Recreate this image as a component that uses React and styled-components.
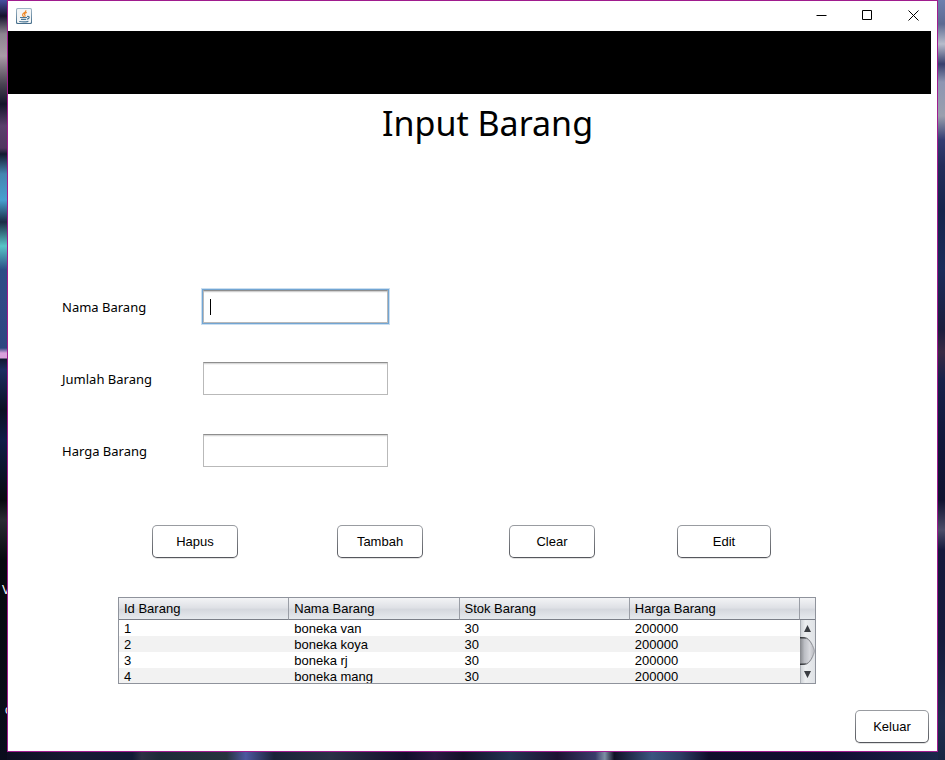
import React from "react";
import styled, { createGlobalStyle } from "styled-components";

const GlobalStyle = createGlobalStyle`
  * { box-sizing: border-box; }
  body { margin: 0; font-family: "Liberation Sans", Arial, sans-serif; font-size: 13px; color: #000; }
`;

const Desktop = styled.div`
  position: relative;
  display: flex;
  min-height: 100vh;
  padding: 0 7px 8px;
  overflow: hidden;
  background:
    linear-gradient(180deg, #4650a0 0, #15122c 16px, #8d8490 34px, #a99aa6 56px, #4a4352 84px, #14142a 104px, #5a3e6c 126px, #51365f 148px, #141a30 154px, #4585b0 174px, #48a0d0 200px, #1b2b45 222px, #58c4c8 246px, #2b4d86 270px, #304a86 298px, #2c4680 348px, #d9a0dc 353px, #d9a0dc 358px, #101830 359px, #1c2c60 370px, #0b1022 410px, #101c48 440px, #08090f 500px, #2a2a33 520px, #07080e 560px, #0a0c1c 100%) left top / 7px 100% no-repeat,
    linear-gradient(180deg, #6d7fae 0, #5d6a92 24px, #b7bccb 44px, #38406e 64px, #8d95b2 82px, #9a9fad 116px, #333c72 140px, #232c5a 166px, #16234c 210px, #1b2a5a 270px, #1c1d3d 330px, #3a2a44 352px, #17204a 380px, #11163a 440px, #101230 500px, #4c4c68 530px, #15183c 550px, #161a3c 640px, #1e2d4e 720px, #182543 100%) right top / 7px 100% no-repeat,
    linear-gradient(90deg, #0d0d20 0, #171a34 8%, #111a35 14%, #2c3044 15%, #1d2a37 17%, #26333e 24%, #4d57a0 26%, #1a2238 29%, #2a3146 35%, #130d2b 43%, #291942 46%, #131128 49%, #233352 54%, #1c1232 59%, #3a3c6a 63%, #7d8fa6 64%, #101126 65%, #3a5580 69%, #2c3c63 72%, #100d2a 75%, #120b32 88%, #1b2a4c 100%);
`;

const WallpaperText = styled.span`
  position: absolute;
  left: ${(p) => p.$left}px;
  top: ${(p) => p.$top}px;
  color: #fff;
  font-size: 12px;
  line-height: 14px;
`;

const Window = styled.main`
  position: relative;
  flex: 1;
  display: flex;
  flex-direction: column;
  background: #fff;
  border: 1px solid #a01c8e;
`;

const TitleBar = styled.header`
  display: flex;
  align-items: center;
  justify-content: space-between;
  height: 30px;
  padding-left: 8px;
`;

const WindowControls = styled.div`
  display: flex;
  align-self: flex-start;
`;

const ControlButton = styled.button`
  display: flex;
  align-items: center;
  justify-content: center;
  width: 46px;
  height: 29px;
  padding: 0 1px 0 0;
  border: 0;
  background: transparent;

  svg { display: block; }
`;

const Banner = styled.div`
  height: 63px;
  margin-right: 6px;
  background: #000;
`;

const Title = styled.h1`
  margin: 4px 0 0 30px;
  font: 400 34px/50px "Noto Sans", sans-serif;
  text-align: center;
`;

const Form = styled.form`
  display: flex;
  flex-direction: column;
`;

const Fields = styled.div`
  display: grid;
  gap: 37px;
  padding: 141px 54px 0;
`;

const Field = styled.div`
  display: grid;
  grid-template-columns: 140px 187px;
  align-items: center;
`;

const FieldLabel = styled.label`
  font: 400 13px/18px "Noto Sans", sans-serif;
`;

const TextInput = styled.input`
  height: 33px;
  margin: 1px;
  padding: 0 7px;
  border: 1px solid #b9b9b9;
  border-top-color: #8e8e8e;
  outline: 0;
  background: #fff;
  box-shadow: inset 0 1px #d8d8d8, inset 0 2px #f4f4f4;
  font: 400 14px/18px "Noto Sans", sans-serif;

  &:focus {
    box-shadow: inset 0 1px #d0d0d0, inset 0 2px #f4f4f4, 0 0 0 1px #72a5d3, 0 0 0 2px #c9def0;
  }

  &:focus:placeholder-shown {
    caret-color: transparent;
    background: linear-gradient(#000, #000) 6px 8px / 1px 16px no-repeat #fff;
  }
`;

const Actions = styled.div`
  display: grid;
  grid-template-columns: 185px 172px 168px 94px;
  padding: 57px 0 0 144px;
`;

const Button = styled.button`
  width: ${(p) => (p.$wide ? 94 : 86)}px;
  height: 33px;
  padding: 0;
  border: 1px solid transparent;
  border-radius: 5px;
  background:
    linear-gradient(#fff, #fff) padding-box,
    linear-gradient(#9a9da2, #54565c) border-box;
  box-shadow: 0 1px #e2e2e2;
  font: 400 13px/16px "Liberation Sans", Arial, sans-serif;
  color: #000;
`;

const TableFrame = styled.div`
  height: 87px;
  margin: 39px 121px 0 110px;
  overflow: hidden;
  border: 1px solid #8f939c;
`;

const Table = styled.table`
  width: 100%;
  table-layout: fixed;
  border-collapse: separate;
  border-spacing: 0;
`;

const HeadCell = styled.th`
  width: ${(p) => (p.$narrow ? "15px" : "auto")};
  height: 22px;
  padding: 0 5px;
  border-right: ${(p) => (p.$narrow ? "0" : "1px solid #9a9ea6")};
  border-bottom: 1px solid #7b7f88;
  background: linear-gradient(#f3f4f6 0, #dfe1e6 45%, #d5d8de 55%, #e6eaee 100%);
  font-weight: 400;
  line-height: 16px;
  text-align: left;
`;

const Row = styled.tr`
  background: ${(p) => (p.$striped ? "#f2f2f2" : "#fff")};
`;

const Cell = styled.td`
  height: 16px;
  padding: 1px 5px 0;
  line-height: 15px;
`;

const ScrollCell = styled.td`
  padding: 0;
  vertical-align: top;
  line-height: 0;
`;

const Footer = styled.footer`
  display: flex;
  justify-content: flex-end;
  padding: 26px 8px 8px;

  button { width: 74px; }
`;

const JavaIcon = () => (
  <svg width="16" height="16" viewBox="0 0 16 16" aria-hidden="true">
    <defs>
      <linearGradient id="tile" x1="0" y1="0" x2="0" y2="1">
        <stop offset="0" stopColor="#a4b9c9" />
        <stop offset="1" stopColor="#426b89" />
      </linearGradient>
    </defs>
    <rect width="16" height="16" rx="1.5" fill="url(#tile)" />
    <rect x="1" y="1" width="14" height="14" rx="1" fill="#f3f5f6" />
    <path d="M9.8 2.2C10.6 4.6 6 5 6.6 7.2 6.8 8 7.6 8.4 7.9 9M10.8 4.4C8.4 5.2 8 6.2 9 7.2 9.4 7.8 8.8 8.4 8.6 8.8" fill="none" stroke="#ee8a2a" strokeWidth="1.2" />
    <path d="M4 9.5h7M11 8.5c3-.7 2.8 2.2 0 2.6M5 11.4h5.2M3.2 13.5c3 .5 6.4.5 9.2-.2" fill="none" stroke="#4c7896" strokeWidth="1.2" />
  </svg>
);

const controlShapes = {
  Minimize: "M0.5 5.5h10",
  Maximize: "M0.5 0.5h9v9h-9z",
  Close: "M0.5 0.5l10 10M10.5 0.5l-10 10",
};

const ScrollBar = () => (
  <svg width="15" height="64" viewBox="0 0 15 64" aria-hidden="true">
    <defs>
      <linearGradient id="track">
        <stop offset="0" stopColor="#c9cdd2" />
        <stop offset="0.35" stopColor="#eceef0" />
        <stop offset="1" stopColor="#dfe2e6" />
      </linearGradient>
      <linearGradient id="thumb">
        <stop offset="0" stopColor="#85878c" />
        <stop offset="0.3" stopColor="#bcbec4" />
        <stop offset="0.65" stopColor="#d8d9de" />
        <stop offset="1" stopColor="#b4b6bc" />
      </linearGradient>
      <linearGradient id="edge">
        <stop offset="0" stopColor="#2c2e31" />
        <stop offset="0.5" stopColor="#6c6f74" />
        <stop offset="1" stopColor="#a9abb1" />
      </linearGradient>
    </defs>
    <rect width="15" height="64" fill="url(#track)" />
    <path d="M0.5 0v64" stroke="#aaaeb4" />
    <path d="M7.5 5l3.5 7H4zM7.5 58L11 51H4z" fill="#3a3d42" />
    <path d="M0 17h4c5 0 9 6 11 14-2 9-6 14-11 14H0z" fill="url(#thumb)" />
    <path d="M0 17.5h4c4 0 8 5 10.5 13.5C12 40 8 44.5 4 44.5H0" fill="none" stroke="url(#edge)" />
    <path d="M0 18.5h6M0 43.5h6" stroke="#4a4c50" strokeOpacity="0.6" />
  </svg>
);

const fields = [
  { id: "nama", label: "Nama Barang" },
  { id: "jumlah", label: "Jumlah Barang" },
  { id: "harga", label: "Harga Barang" },
];

const columns = ["Id Barang", "Nama Barang", "Stok Barang", "Harga Barang"];

const items = [
  ["1", "boneka van", "30", "200000"],
  ["2", "boneka koya", "30", "200000"],
  ["3", "boneka rj", "30", "200000"],
  ["4", "boneka mang", "30", "200000"],
];

export default function App() {
  return (
    <Desktop>
      <GlobalStyle />
      <WallpaperText $left={2} $top={583}>V</WallpaperText>
      <WallpaperText $left={5} $top={703}>c</WallpaperText>
      <Window>
        <TitleBar>
          <JavaIcon />
          <WindowControls>
            {Object.entries(controlShapes).map(([name, shape]) => (
              <ControlButton key={name} type="button" aria-label={name}>
                <svg width="11" height="11" viewBox="0 0 11 11">
                  <path d={shape} fill="none" stroke="#000" />
                </svg>
              </ControlButton>
            ))}
          </WindowControls>
        </TitleBar>
        <Banner />
        <Title>Input Barang</Title>
        <Form onSubmit={(event) => event.preventDefault()}>
          <Fields>
            {fields.map((field, index) => (
              <Field key={field.id}>
                <FieldLabel htmlFor={field.id}>{field.label}</FieldLabel>
                <TextInput id={field.id} type="text" placeholder=" " autoFocus={index === 0} />
              </Field>
            ))}
          </Fields>
          <Actions>
            <Button type="button">Hapus</Button>
            <Button type="submit">Tambah</Button>
            <Button type="reset">Clear</Button>
            <Button type="button" $wide>Edit</Button>
          </Actions>
        </Form>
        <TableFrame>
          <Table>
            <thead>
              <tr>
                {columns.map((name) => (
                  <HeadCell key={name} scope="col">{name}</HeadCell>
                ))}
                <HeadCell $narrow as="td" />
              </tr>
            </thead>
            <tbody>
              {items.map((item, index) => (
                <Row key={item[0]} $striped={index % 2 === 1}>
                  {item.map((value, column) => (
                    <Cell key={columns[column]}>{value}</Cell>
                  ))}
                  {index === 0 && (
                    <ScrollCell rowSpan={items.length}>
                      <ScrollBar />
                    </ScrollCell>
                  )}
                </Row>
              ))}
            </tbody>
          </Table>
        </TableFrame>
        <Footer>
          <Button type="button">Keluar</Button>
        </Footer>
      </Window>
    </Desktop>
  );
}
